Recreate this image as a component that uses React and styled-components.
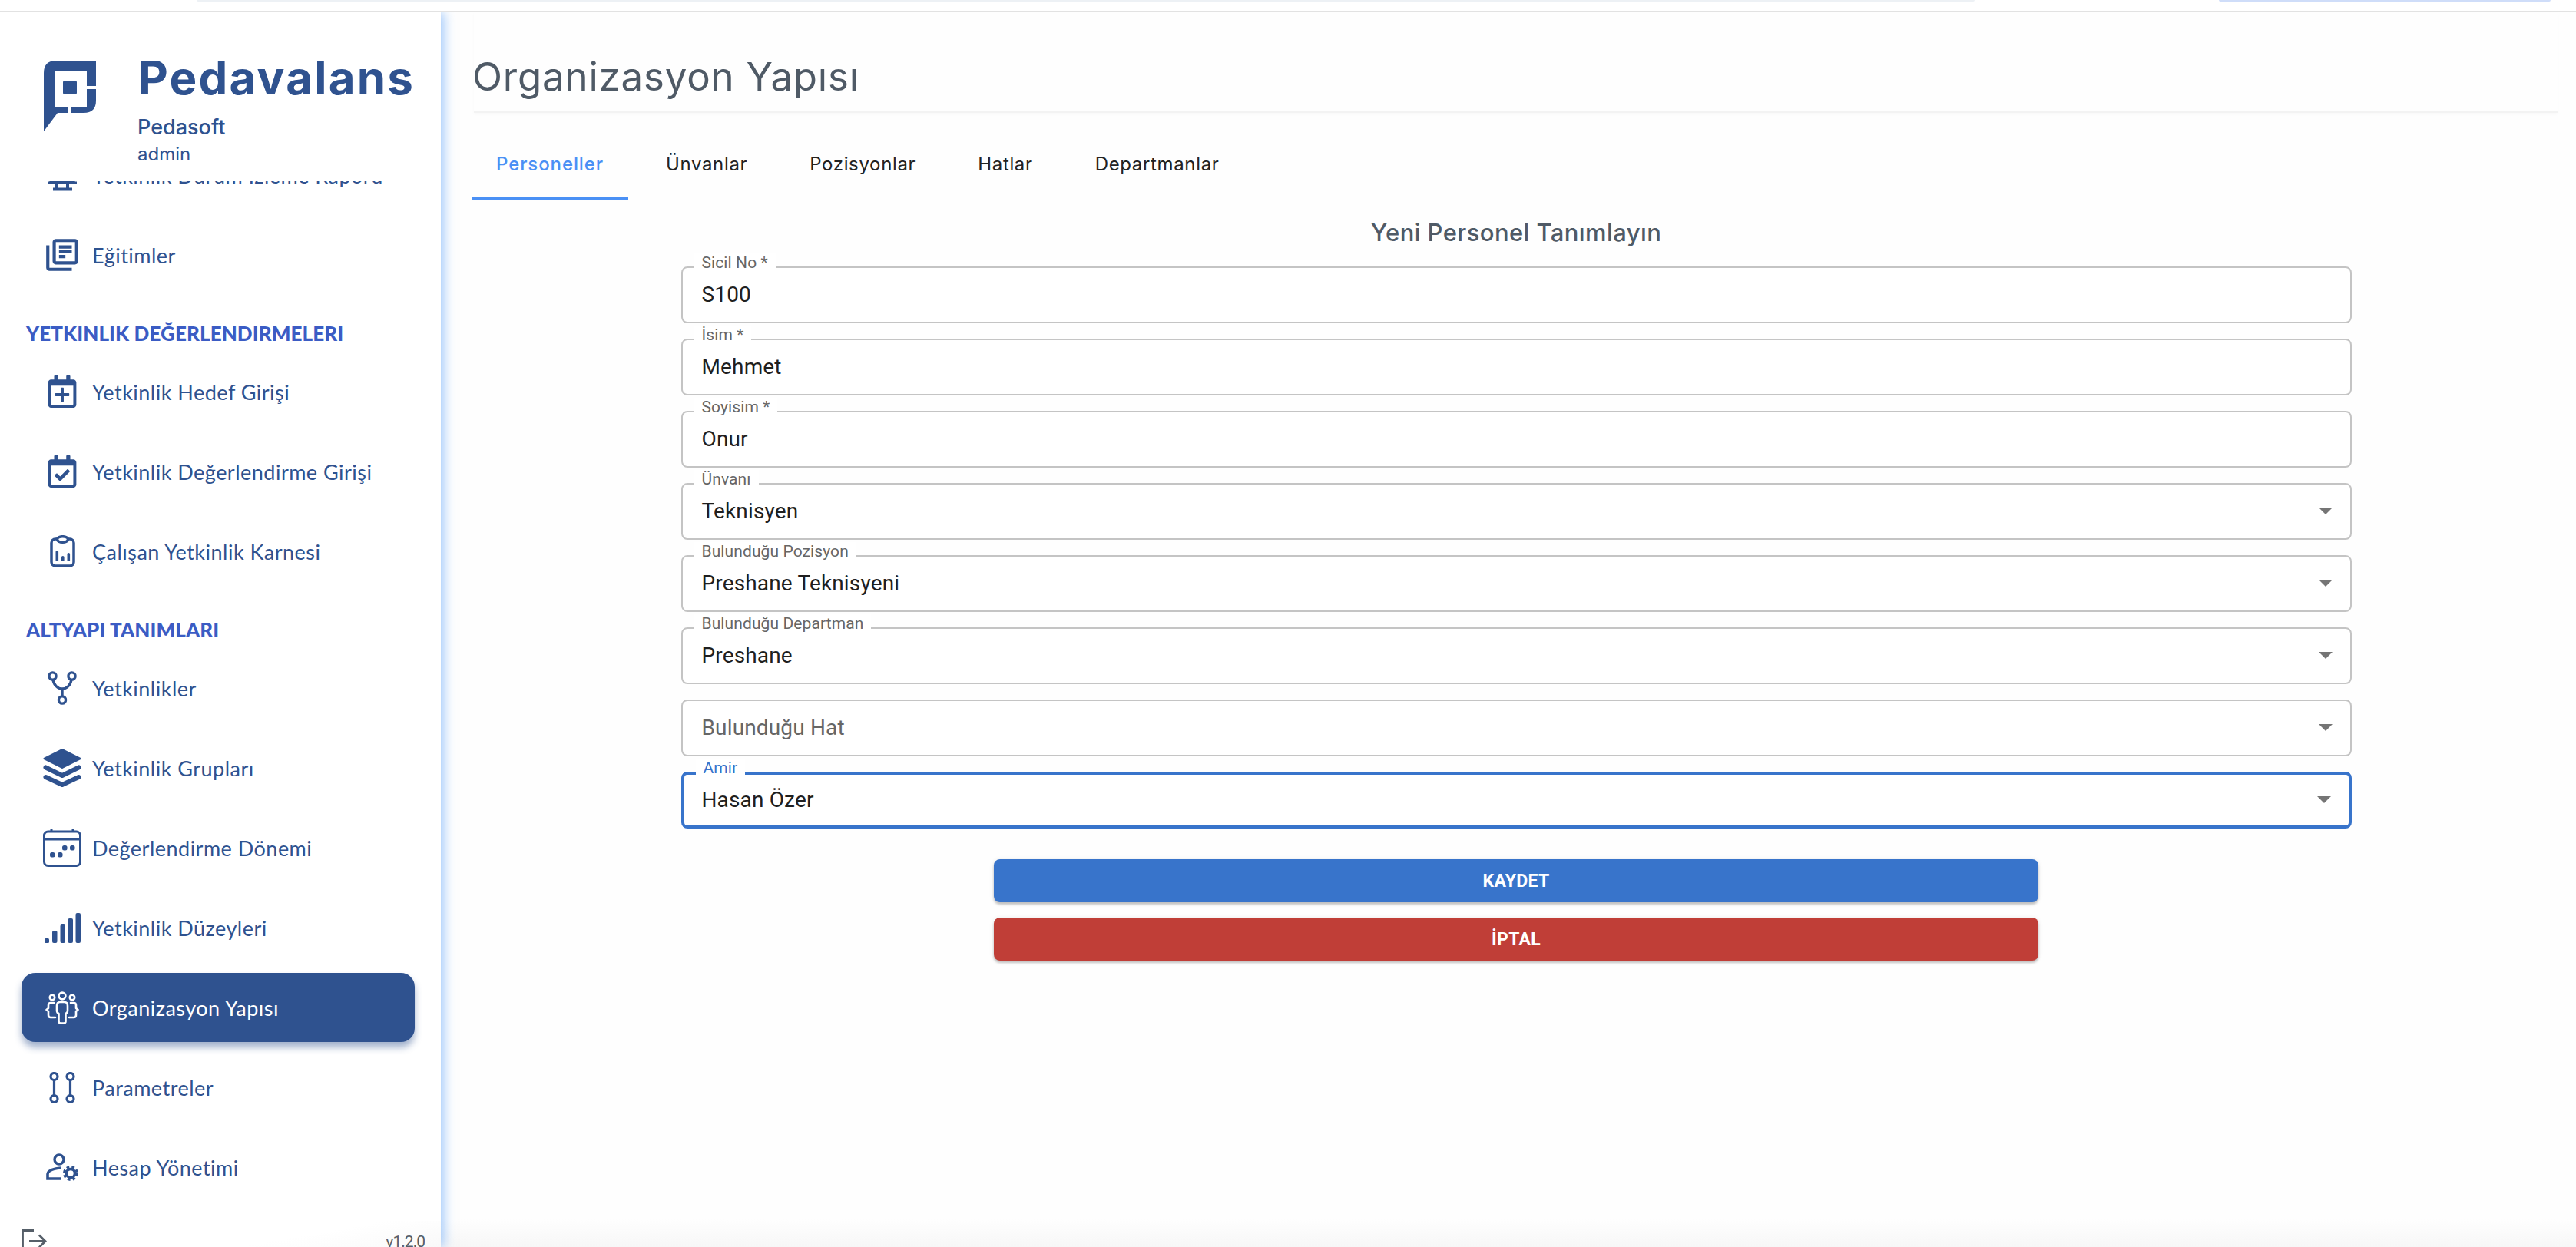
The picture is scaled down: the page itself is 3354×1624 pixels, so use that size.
import React from 'react';
import styled, { createGlobalStyle } from 'styled-components';
import { FaRegCalendarPlus, FaRegCalendarCheck } from 'react-icons/fa';
import { MdOutlineLibraryBooks } from 'react-icons/md';

const NAVY = '#2f528f';

const Global = createGlobalStyle`
  html, body { margin: 0; padding: 0; height: 100%; overflow: hidden; background: #fff; }
  #root { height: 100%; }
  * { box-sizing: border-box; }
`;

const Page = styled.div`
  width: 3354px;
  height: 1624px;
  display: flex;
  flex-direction: column;
  overflow: hidden;
  background: #fff;
`;

const TopBar = styled.header`
  flex: 0 0 16px;
  display: flex;
  align-items: flex-start;
  border-bottom: 2px solid #e2e2e2;
  padding-left: 256px;
  gap: 318px;
  background: #fff;
  position: relative;
  z-index: 3;
`;

const TopStrip = styled.div`
  width: ${p => p.$w}px;
  height: 2px;
  border-radius: 0 0 4px 4px;
  background: ${p => p.$c};
`;

const Body = styled.div`
  flex: 1;
  min-height: 0;
  display: flex;
`;

const Sidebar = styled.aside`
  flex: 0 0 574px;
  display: flex;
  flex-direction: column;
  overflow: hidden;
  background: #fff;
  position: relative;
  z-index: 2;
  box-shadow: 4px 0 14px rgba(70, 150, 250, 0.5);
`;

const Brand = styled.div`
  flex: 0 0 220px;
  display: flex;
  align-items: flex-start;
  padding: 63px 0 0 57px;
  gap: 55px;
  color: ${NAVY};
  font-family: Inter, sans-serif;
`;

const BrandText = styled.div`
  display: flex;
  flex-direction: column;
`;

const BrandName = styled.div`
  font-size: 60px;
  line-height: 44px;
  font-weight: 700;
  letter-spacing: 2.2px;
`;

const BrandOrg = styled.div`
  font-size: 27px;
  line-height: 30px;
  font-weight: 500;
  margin: 28px 0 0 -1px;
`;

const BrandUser = styled.div`
  font-size: 24px;
  line-height: 28px;
  margin: 6px 0 0 -1px;
`;

const NavScroll = styled.nav`
  flex: 0 0 1354px;
  overflow: hidden;
`;

const NavList = styled.div`
  margin-top: -53px;
  display: flex;
  flex-direction: column;
  gap: 14px;
`;

const NavItem = styled.div`
  height: 90px;
  width: 512px;
  margin-left: 28px;
  padding-left: 28px;
  display: flex;
  align-items: center;
  gap: 14px;
  border-radius: 18px;
  font-family: Lato, sans-serif;
  font-size: 27px;
  letter-spacing: 0.48px;
  color: ${p => (p.$active ? '#fff' : NAVY)};
  background: ${p => (p.$active ? NAVY : 'transparent')};
  box-shadow: ${p => (p.$active ? '0 7px 10px rgba(47, 82, 143, 0.45)' : 'none')};
`;

const IconBox = styled.span`
  flex: 0 0 50px;
  height: 50px;
  display: flex;
  align-items: center;
  justify-content: center;
`;

const SectionTitle = styled.div`
  height: 60px;
  padding: 26px 0 0 34px;
  line-height: 34px;
  font-family: Lato, sans-serif;
  font-size: 26px;
  font-weight: 900;
  letter-spacing: 0.1px;
  color: #3b5cc4;
`;

const SideFooter = styled.div`
  flex: 0 0 60px;
  display: flex;
  align-items: flex-start;
  justify-content: space-between;
  padding: 11px 21px 0 28px;
  color: #555e68;
  background: linear-gradient(170deg, #fff 55%, #f6f6f6 100%);
`;

const Version = styled.span`
  font-family: Roboto, sans-serif;
  font-size: 21px;
  letter-spacing: -1px;
  line-height: 26px;
  margin-top: 3px;
`;

const Main = styled.main`
  flex: 1;
  min-width: 0;
  padding: 0 20px 0 40px;
  background: linear-gradient(to bottom, #fefefe calc(100% - 36px), #f7f7f7 100%);
`;

const Title = styled.h1`
  margin: 0 4px 0 3px;
  padding: 54px 0 15px;
  text-indent: -2px;
  font-family: Inter, sans-serif;
  font-size: 51px;
  line-height: 60px;
  font-weight: 400;
  color: #4f5a66;
  letter-spacing: 0.8px;
  border-bottom: 2px solid #f3f3f3;
  box-shadow: 0 2px 4px rgba(0, 0, 0, 0.025);
`;

const Tabs = styled.div`
  margin-top: 18px;
  display: flex;
  gap: 17px;
`;

const Tab = styled.div`
  height: 96px;
  padding: 0 32px;
  display: flex;
  align-items: center;
  font-family: Inter, sans-serif;
  font-size: 24px;
  font-weight: ${p => (p.$active ? 500 : 400)};
  letter-spacing: ${p => (p.$active ? 0.9 : 0.65)}px;
  color: ${p => (p.$active ? '#4a90f5' : '#222')};
  box-shadow: ${p => (p.$active ? 'inset 0 -4px 0 #4a90f5' : 'none')};
`;

const FormTitle = styled.h2`
  margin: 22px 0 0;
  text-align: center;
  font-family: Inter, sans-serif;
  font-size: 31px;
  line-height: 40px;
  font-weight: 500;
  letter-spacing: 0.4px;
  color: #4f5a66;
`;

const Form = styled.form`
  width: 2175px;
  margin: 24px auto 0;
  display: flex;
  flex-direction: column;
  gap: 20px;
`;

const Field = styled.div`
  position: relative;
  height: 74px;
  display: flex;
  align-items: center;
  justify-content: space-between;
  padding: 0 23px 1px ${p => (p.$focus ? 23 : 25)}px;
  border: ${p => (p.$focus ? '4px solid #3874cb' : '2px solid #c4c4c4')};
  border-radius: 8px;
  background: #fff;
  font-family: Roboto, sans-serif;
  font-size: 28px;
  letter-spacing: 0.15px;
  color: #1f1f1f;
`;

const FieldLabel = styled.label`
  position: absolute;
  left: 15px;
  top: ${p => (p.$focus ? -21 : -19)}px;
  padding: 0 10px;
  background: #fff;
  font-size: 21px;
  line-height: 24px;
  letter-spacing: 0.1px;
  color: ${p => (p.$focus ? '#3874cb' : '#666')};
`;

const Placeholder = styled.span`
  color: #666;
`;

const Arrow = styled.span`
  width: 0;
  height: 0;
  border-left: 9px solid transparent;
  border-right: 9px solid transparent;
  border-top: 9px solid #757575;
`;

const Actions = styled.div`
  width: 1360px;
  margin: 40px 0 0 680px;
  display: flex;
  flex-direction: column;
  gap: 20px;
`;

const Button = styled.button`
  height: 56px;
  border: 0;
  border-radius: 8px;
  background: ${p => p.$bg};
  color: #fff;
  font-family: Roboto, sans-serif;
  font-size: 23px;
  font-weight: 700;
  letter-spacing: 0.3px;
  box-shadow: 0 3px 3px rgba(0, 0, 0, 0.2), 0 1px 6px rgba(0, 0, 0, 0.1);
`;

const Logo = () => (
  <svg width="68" height="92" viewBox="0 0 68 92" fill={NAVY} style={{ flex: 'none' }}>
    <path d="M0 92V16Q0 0 16 0H68V33H56V14H14V60H31V68H18Z" />
    <path d="M36 60H56V37H68V52Q68 68 52 68H36Z" />
    <rect x="25" y="26" width="18" height="18" rx="2" />
  </svg>
);

const SVG = ({ w, h, children, ...rest }) => (
  <svg width={w} height={h} viewBox={`0 0 ${w} ${h}`} fill="none" stroke="currentColor" {...rest}>
    {children}
  </svg>
);

const IconReport = () => (
  <SVG w={40} h={50} strokeWidth="3">
    <rect x="4" y="2" width="32" height="31" rx="2" />
    <path d="M1 35H39" />
    <path d="M13 35V43M27 35V43" strokeWidth="4" />
    <path d="M8 43.5H33" strokeWidth="4" />
  </SVG>
);

const IconClipboard = () => (
  <SVG w={33} h={42} strokeWidth="3.5">
    <rect x="2" y="5" width="29" height="35" rx="5" />
    <ellipse cx="16.5" cy="5.5" rx="7" ry="3.8" fill="#fff" />
    <g stroke="none" fill="currentColor">
      <rect x="7.5" y="20" width="3.6" height="14" rx="1.8" />
      <rect x="15" y="27" width="3.6" height="7" rx="1.8" />
      <rect x="22.5" y="23" width="3.6" height="11" rx="1.8" />
    </g>
  </SVG>
);

const IconFork = () => (
  <SVG w={38} h={44} strokeWidth="3.4">
    <circle cx="6.5" cy="6.5" r="4.6" />
    <circle cx="31.5" cy="6.5" r="4.6" />
    <circle cx="19" cy="37.5" r="4.6" />
    <path d="M7 11C8 18 13 23 19 23C25 23 30 18 31 11" />
    <path d="M19 23V33" />
  </SVG>
);

const IconLayers = () => (
  <SVG w={50} h={50} strokeLinejoin="round">
    <path d="M25 1.5L48 13L25 24.5L2 13Z" fill="currentColor" strokeWidth="3" />
    <path d="M3.5 24.5L25 35L46.5 24.5" strokeWidth="6" strokeLinecap="round" />
    <path d="M3.5 37L25 47L46.5 37" strokeWidth="6" strokeLinecap="round" />
  </SVG>
);

const IconPeriod = () => (
  <SVG w={50} h={50} strokeWidth="3">
    <rect x="1.5" y="4" width="47" height="44.5" rx="5" />
    <path d="M1.5 14H48.5" />
    <path d="M11 0V4M39 0V4" />
    <g stroke="none" fill="currentColor">
      <rect x="9" y="31" width="6.5" height="6.5" rx="2.5" />
      <rect x="19" y="31" width="6.5" height="6.5" rx="2.5" />
      <rect x="25" y="22" width="6.5" height="6.5" rx="2.5" />
      <rect x="35" y="22" width="6.5" height="6.5" rx="2.5" />
    </g>
  </SVG>
);

const IconBars = () => (
  <SVG w={47} h={39} stroke="none" fill="currentColor">
    <rect x="0" y="33" width="6" height="6" rx="1.5" />
    <rect x="10" y="23" width="6.5" height="16" rx="2" />
    <rect x="20.5" y="15" width="6.5" height="24" rx="2" />
    <rect x="30.5" y="7" width="6.5" height="32" rx="2" />
    <rect x="40.5" y="0" width="6.5" height="39" rx="2" />
  </SVG>
);

const IconOrg = () => (
  <SVG w={44} h={43} strokeWidth="2.6" strokeLinecap="round" strokeLinejoin="round">
    <circle cx="22" cy="6" r="4.4" />
    <circle cx="9" cy="8" r="3.2" />
    <circle cx="35" cy="8" r="3.2" />
    <path d="M15 19Q15 14 19 14H25Q29 14 29 19V25Q29 28 26.5 29V39Q26.5 41.5 24 41.5H20Q17.5 41.5 17.5 39V29Q15 28 15 25Z" />
    <path d="M11 15H7Q4 15 4 18V22L1.5 24L4 26V31Q4 34 7 34H13" />
    <path d="M33 15H37Q40 15 40 18V22L42.5 24L40 26V31Q40 34 37 34H31" />
  </SVG>
);

const IconParams = () => (
  <SVG w={34} h={41} strokeWidth="3.2">
    <circle cx="6.5" cy="6" r="4.5" />
    <circle cx="27.5" cy="6" r="4.5" />
    <circle cx="6.5" cy="35" r="4.5" />
    <circle cx="27.5" cy="35" r="4.5" />
    <path d="M6.5 10.5V30.5M27.5 10.5V30.5" />
  </SVG>
);

const IconAccount = () => (
  <SVG w={43} h={36}>
    <circle cx="17" cy="8" r="6" strokeWidth="3.4" />
    <path d="M19 19C10 20 2 22 2 27V33H20" strokeWidth="3.6" />
    <circle cx="32" cy="26" r="5.5" strokeWidth="3.6" />
    <circle cx="32" cy="26" r="8.3" strokeWidth="3.4" strokeDasharray="3.6 3.1" />
  </SVG>
);

const IconLogout = () => (
  <SVG w={33} h={40} strokeWidth="2.8">
    <path d="M1.5 40V1.5H16" />
    <path d="M10 15.5H31M23 7.5L31 15.5L23 23.5" />
  </SVG>
);

const Item = ({ icon, label, active }) => (
  <NavItem $active={active}>
    <IconBox>{icon}</IconBox>
    {label}
  </NavItem>
);

const fields = [
  { label: 'Sicil No *', value: 'S100' },
  { label: 'İsim *', value: 'Mehmet' },
  { label: 'Soyisim *', value: 'Onur' },
  { label: 'Ünvanı', value: 'Teknisyen', select: true },
  { label: 'Bulunduğu Pozisyon', value: 'Preshane Teknisyeni', select: true },
  { label: 'Bulunduğu Departman', value: 'Preshane', select: true },
  { placeholder: 'Bulunduğu Hat', select: true },
  { label: 'Amir', value: 'Hasan Özer', select: true, focus: true },
];

const tabs = ['Personeller', 'Ünvanlar', 'Pozisyonlar', 'Hatlar', 'Departmanlar'];

export default function App() {
  return (
    <Page>
      <Global />
      <TopBar>
        <TopStrip $w={2315} $c="#edf1f5" />
        <TopStrip $w={432} $c="#cfddf9" />
      </TopBar>
      <Body>
        <Sidebar>
          <Brand>
            <Logo />
            <BrandText>
              <BrandName>Pedavalans</BrandName>
              <BrandOrg>Pedasoft</BrandOrg>
              <BrandUser>admin</BrandUser>
            </BrandText>
          </Brand>
          <NavScroll>
            <NavList>
              <Item icon={<IconReport />} label="Yetkinlik Durum İzleme Raporu" />
              <Item icon={<MdOutlineLibraryBooks size={50} />} label="Eğitimler" />
              <SectionTitle>YETKINLIK DEĞERLENDIRMELERI</SectionTitle>
              <Item icon={<FaRegCalendarPlus size={42} />} label="Yetkinlik Hedef Girişi" />
              <Item icon={<FaRegCalendarCheck size={42} />} label="Yetkinlik Değerlendirme Girişi" />
              <Item icon={<IconClipboard />} label="Çalışan Yetkinlik Karnesi" />
              <SectionTitle>ALTYAPI TANIMLARI</SectionTitle>
              <Item icon={<IconFork />} label="Yetkinlikler" />
              <Item icon={<IconLayers />} label="Yetkinlik Grupları" />
              <Item icon={<IconPeriod />} label="Değerlendirme Dönemi" />
              <Item icon={<IconBars />} label="Yetkinlik Düzeyleri" />
              <Item icon={<IconOrg />} label="Organizasyon Yapısı" active />
              <Item icon={<IconParams />} label="Parametreler" />
              <Item icon={<IconAccount />} label="Hesap Yönetimi" />
            </NavList>
          </NavScroll>
          <SideFooter>
            <IconLogout />
            <Version>v1.2.0</Version>
          </SideFooter>
        </Sidebar>
        <Main>
          <Title>Organizasyon Yapısı</Title>
          <Tabs>
            {tabs.map((t, i) => (
              <Tab key={t} $active={i === 0}>{t}</Tab>
            ))}
          </Tabs>
          <FormTitle>Yeni Personel Tanımlayın</FormTitle>
          <Form>
            {fields.map((f, i) => (
              <Field key={i} $focus={f.focus}>
                {f.label && <FieldLabel $focus={f.focus}>{f.label}</FieldLabel>}
                {f.placeholder ? <Placeholder>{f.placeholder}</Placeholder> : <span>{f.value}</span>}
                {f.select && <Arrow />}
              </Field>
            ))}
          </Form>
          <Actions>
            <Button type="button" $bg="#3874cb">KAYDET</Button>
            <Button type="button" $bg="#c03e37">İPTAL</Button>
          </Actions>
        </Main>
      </Body>
    </Page>
  );
}
